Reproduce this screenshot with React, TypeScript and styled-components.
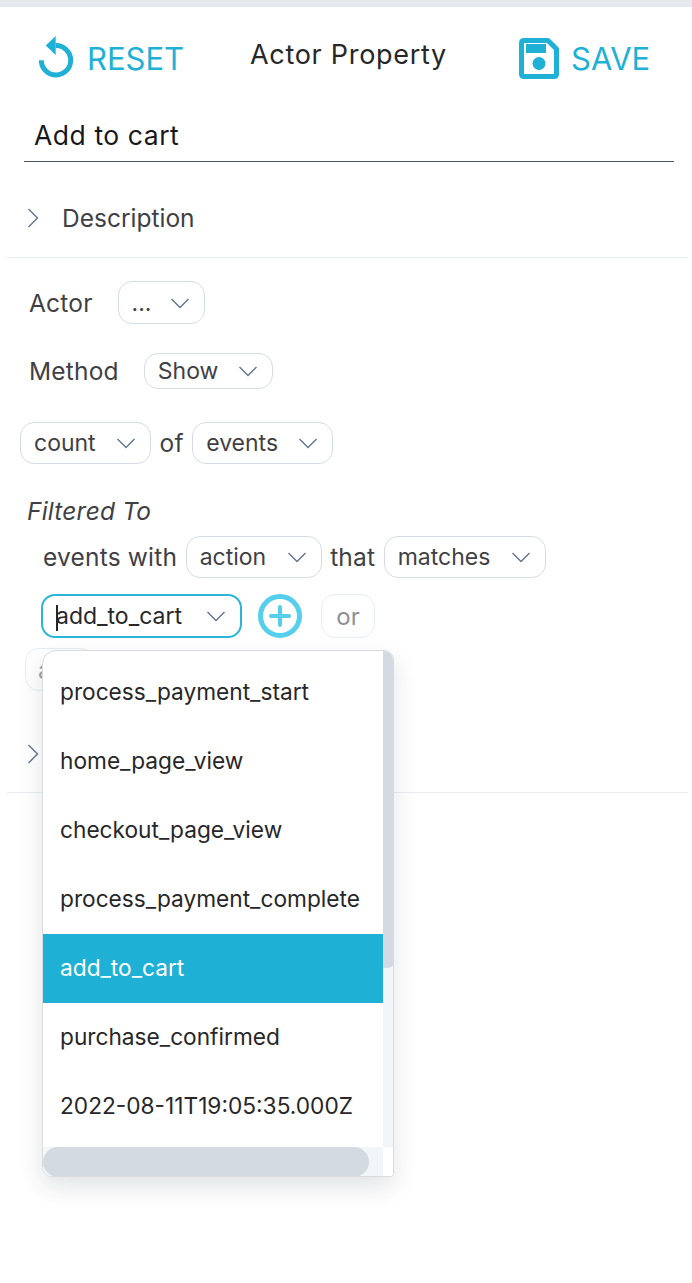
import React from "react";
import styled, { createGlobalStyle } from "styled-components";

const GlobalStyle = createGlobalStyle`
  html, body {
    margin: 0;
    padding: 0;
    background: #fff;
  }
  body {
    font-family: Inter, "Liberation Sans", sans-serif;
    color: #27272a;
  }
`;

const Page = styled.div`
  width: 692px;
  height: 1283px;
  overflow: hidden;
  border-top: 7px solid #e5e8ec;
  box-sizing: border-box;
`;

const Toolbar = styled.div`
  display: flex;
  align-items: flex-start;
  height: 80px;
  padding: 31px 0 0 38px;
  box-sizing: border-box;
`;

const ToolButton = styled.div<{ $width: number }>`
  display: flex;
  align-items: center;
  gap: 12px;
  width: ${(p) => p.$width}px;
  height: 40px;
  color: #1fb1d5;
  font-size: 31px;
  white-space: nowrap;
`;

const Title = styled.div`
  width: 269px;
  font-size: 27px;
  line-height: 34px;
  letter-spacing: 0.7px;
  color: #27272a;
`;

const NameField = styled.div`
  margin: 11px 18px 0 24px;
  height: 64px;
  padding: 14px 0 0 10px;
  font-size: 26.5px;
  line-height: 46px;
  letter-spacing: 0.55px;
  color: #18181b;
  border-bottom: 1px solid #4b5563;
  box-sizing: border-box;
`;

const Collapse = styled.div<{ $height: number; $top?: number; $pad?: number }>`
  display: flex;
  align-items: center;
  gap: 23px;
  height: ${(p) => p.$height}px;
  margin: ${(p) => p.$top ?? 0}px 4px 0 7px;
  padding: ${(p) => p.$pad ?? 0}px 0 0 20px;
  font-size: 24.5px;
  color: #3f3f46;
  border-bottom: 1px solid #e9edf1;
  box-sizing: border-box;
`;

const Body = styled.div`
  padding: 0 0 0 20px;
  font-size: 24.5px;
  letter-spacing: 0.2px;
  color: #3f3f46;
`;

const Row = styled.div<{ $top: number; $left?: number; $gap?: number }>`
  display: flex;
  align-items: center;
  gap: ${(p) => p.$gap ?? 8.5}px;
  margin-top: ${(p) => p.$top}px;
  margin-left: ${(p) => p.$left ?? 0}px;
`;

const Pill = styled.div<{ $width: number; $height: number }>`
  display: flex;
  align-items: center;
  justify-content: space-between;
  width: ${(p) => p.$width}px;
  height: ${(p) => p.$height}px;
  padding: 0 14px 0 13px;
  border: 1px solid #d5dce4;
  border-radius: 14px;
  box-sizing: border-box;
  font-size: 23px;
  letter-spacing: 0;
  color: #3f3f46;
  background: #fff;
`;

const FocusPill = styled(Pill)`
  position: relative;
  border: 2px solid #2cb5d8;
  color: #27272a;
`;

const Caret = styled.span`
  position: absolute;
  left: 13px;
  top: 9px;
  width: 2px;
  height: 26px;
  background: #27272a;
`;

const FilteredTitle = styled.div`
  margin: 33px 0 0 7px;
  height: 30px;
  line-height: 28px;
  font-style: italic;
`;

const RoundAdd = styled.div`
  display: flex;
  margin-left: 16px;
`;

const OrButton = styled.div`
  display: flex;
  align-items: center;
  justify-content: center;
  width: 54px;
  height: 44px;
  margin-left: 19px;
  border: 1px solid #e8edf2;
  border-radius: 14px;
  box-sizing: border-box;
  font-size: 24px;
  letter-spacing: 0;
  color: #8f8f94;
`;

const FilterBlock = styled.div`
  position: relative;
`;

const HiddenPill = styled.div`
  width: 70px;
  height: 43px;
  margin: 10px 0 0 5px;
  padding-left: 12px;
  line-height: 42px;
  border: 1px solid #e8edf2;
  border-radius: 14px;
  box-sizing: border-box;
  color: #a1a1aa;
`;

const Dropdown = styled.div`
  position: absolute;
  left: 22px;
  top: 114px;
  z-index: 2;
  display: grid;
  grid-template-columns: 340px 11px;
  grid-template-rows: 496px 30px;
  width: 352px;
  height: 527px;
  background: #fff;
  border: 1px solid #d9dbde;
  border-radius: 14px 10px 4px 10px;
  box-sizing: border-box;
  box-shadow: 0 10px 24px rgba(30, 41, 59, 0.13);
  overflow: hidden;
`;

const OptionList = styled.div`
  padding-top: 7px;
  overflow: hidden;
`;

const Option = styled.div<{ $active?: boolean }>`
  height: 69px;
  padding-left: 17px;
  line-height: 67px;
  font-size: 22.7px;
  letter-spacing: 0;
  white-space: nowrap;
  color: ${(p) => (p.$active ? "#fff" : "#27272a")};
  background: ${(p) => (p.$active ? "#1fb1d5" : "transparent")};
`;

const VTrack = styled.div`
  background: #f3f6f9;
`;

const VThumb = styled.div`
  height: 317px;
  border-radius: 0 6px 6px 0;
  background: #d3dae2;
`;

const HTrack = styled.div`
  background: #f3f6f9;
`;

const HThumb = styled.div`
  width: 326px;
  height: 30px;
  border-radius: 15px;
  background: #d3dae2;
`;

const Corner = styled.div`
  background: #fff;
`;

const Chevron = () => (
  <svg width="20" height="20" viewBox="0 0 20 20" fill="none">
    <path d="M1.5 6 L10 14.5 L18.5 6" stroke="#64748b" strokeWidth="1.4" />
  </svg>
);

const ChevronRight = () => (
  <svg width="12" height="22" viewBox="0 0 12 22" fill="none">
    <path d="M1.5 2 L10.5 11 L1.5 20" stroke="#64748b" strokeWidth="1.4" />
  </svg>
);

const ResetIcon = () => (
  <svg width="37" height="44" viewBox="0 1 37 44" fill="none">
    <path
      d="M17.7 10.6 A14.7 14.7 0 1 1 3.3 25.3"
      stroke="#1fb1d5"
      strokeWidth="5"
    />
    <path d="M17.7 1 L17.7 20 L7.7 10.5 Z" fill="#1fb1d5" />
  </svg>
);

const SaveIcon = () => (
  <svg width="40" height="41" viewBox="0 0 40 41" fill="none">
    <path
      d="M5 2.5 H29 L37.5 11 V36 Q37.5 38.5 35 38.5 H5 Q2.5 38.5 2.5 36 V5 Q2.5 2.5 5 2.5 Z"
      stroke="#1fb1d5"
      strokeWidth="5"
      strokeLinejoin="round"
    />
    <rect x="7" y="6" width="20" height="9" fill="#1fb1d5" />
    <circle cx="20" cy="25.5" r="6.5" fill="#1fb1d5" />
  </svg>
);

const PlusIcon = () => (
  <svg width="44" height="44" viewBox="0 0 44 44" fill="none">
    <circle cx="22" cy="22" r="19.5" stroke="#55cfec" strokeWidth="5" />
    <path
      d="M22 13 V31 M13 22 H31"
      stroke="#55cfec"
      strokeWidth="4"
      strokeLinecap="round"
    />
  </svg>
);

const options = [
  "process_payment_start",
  "home_page_view",
  "checkout_page_view",
  "process_payment_complete",
  "add_to_cart",
  "purchase_confirmed",
  "2022-08-11T19:05:35.000Z",
];

export default function App() {
  return (
    <Page>
      <GlobalStyle />
      <Toolbar>
        <ToolButton $width={212}>
          <ResetIcon />
          RESET
        </ToolButton>
        <Title>Actor Property</Title>
        <ToolButton $width={140}>
          <SaveIcon />
          SAVE
        </ToolButton>
      </Toolbar>
      <NameField>Add to cart</NameField>
      <Collapse $height={96} $pad={17}>
        <ChevronRight />
        Description
      </Collapse>
      <Body>
        <Row $top={23} $left={9} $gap={25}>
          <span>Actor</span>
          <Pill $width={87} $height={43}>
            <span>...</span>
            <Chevron />
          </Pill>
        </Row>
        <Row $top={29} $left={9} $gap={25}>
          <span>Method</span>
          <Pill $width={129} $height={36}>
            <span>Show</span>
            <Chevron />
          </Pill>
        </Row>
        <Row $top={33}>
          <Pill $width={131} $height={42}>
            <span>count</span>
            <Chevron />
          </Pill>
          <span>of</span>
          <Pill $width={141} $height={42}>
            <span>events</span>
            <Chevron />
          </Pill>
        </Row>
        <FilteredTitle>Filtered To</FilteredTitle>
        <FilterBlock>
          <Row $top={9} $left={23}>
            <span>events with</span>
            <Pill $width={136} $height={42}>
              <span>action</span>
              <Chevron />
            </Pill>
            <span>that</span>
            <Pill $width={162} $height={42}>
              <span>matches</span>
              <Chevron />
            </Pill>
          </Row>
          <Row $top={16} $left={21} $gap={0}>
            <FocusPill $width={201} $height={44}>
              <Caret />
              <span>add_to_cart</span>
              <Chevron />
            </FocusPill>
            <RoundAdd>
              <PlusIcon />
            </RoundAdd>
            <OrButton>or</OrButton>
          </Row>
          <HiddenPill>a</HiddenPill>
          <Dropdown>
            <OptionList>
              {options.map((o) => (
                <Option key={o} $active={o === "add_to_cart"}>
                  {o}
                </Option>
              ))}
            </OptionList>
            <VTrack>
              <VThumb />
            </VTrack>
            <HTrack>
              <HThumb />
            </HTrack>
            <Corner />
          </Dropdown>
        </FilterBlock>
      </Body>
      <Collapse $height={78} $top={24}>
        <ChevronRight />
      </Collapse>
    </Page>
  );
}
